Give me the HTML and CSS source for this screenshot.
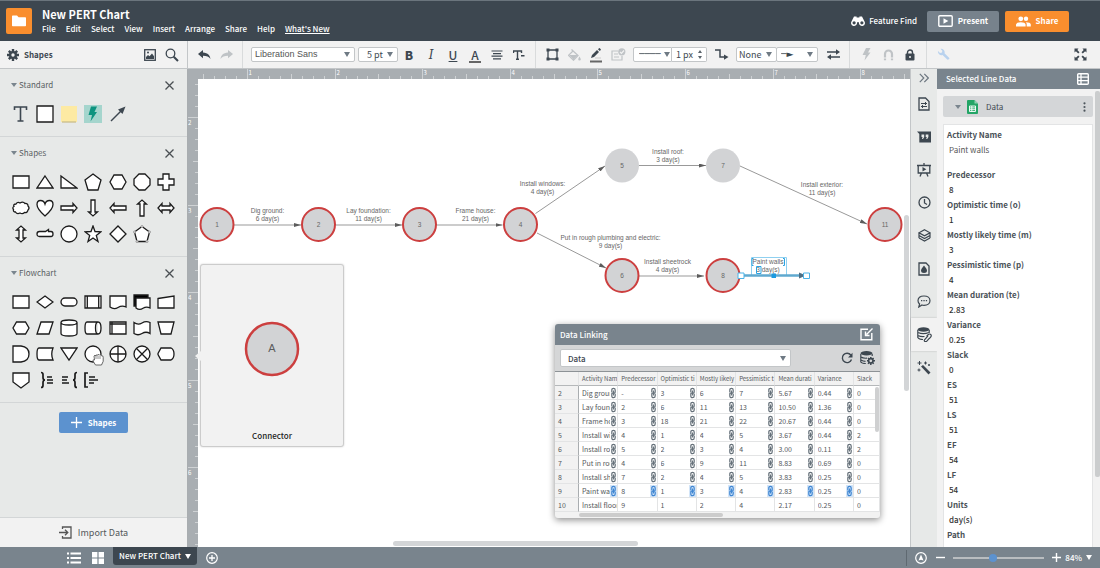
FILE: index.html
```html
<!DOCTYPE html>
<html lang="en">
<head>
    <meta charset="utf-8">
    <title>New PERT Chart</title>
    <meta name="viewport" content="width=device-width, initial-scale=1">
    <link rel="stylesheet" href="styles.css">
</head>
<body>
    <header class="topbar">
        <a href="#" class="logo" aria-label="Documents">
            <svg width="14" height="12" viewBox="0 0 14 12"><path d="M0 1.2Q0 .5.7.5H5l1.6 1.8h6.7q.7 0 .7.7v7.6q0 .7-.7.7H.7q-.7 0-.7-.7z" fill="#fff"/></svg>
        </a>
        <div class="doc">
            <h1>New PERT Chart</h1>
            <nav class="menu">
                <a href="#">File</a>
                <a href="#">Edit</a>
                <a href="#">Select</a>
                <a href="#">View</a>
                <a href="#">Insert</a>
                <a href="#">Arrange</a>
                <a href="#">Share</a>
                <a href="#">Help</a>
                <a href="#" class="whats-new">What's New</a>
            </nav>
        </div>
        <button class="feature-find">
            <svg width="14" height="10" viewBox="0 0 14 10"><path fill="#fff" d="M3 .4h2.6v1.1h2.8V.4H11l2.5 5A3 3 0 1 1 8 7.5V6.3H6v1.2A3 3 0 1 1 .5 5.4z"/><circle cx="3.1" cy="6.8" r="1.6" fill="#3d4750"/><circle cx="10.9" cy="6.8" r="1.6" fill="#3d4750"/></svg>
            Feature Find
        </button>
        <button class="btn btn-present">
            <svg width="15" height="12" viewBox="0 0 15 12"><rect x=".8" y=".8" width="13.4" height="10.4" rx="1" fill="none" stroke="#fff" stroke-width="1.4"/><path d="M5.5 3.2v5.6L10.300 6z" fill="#fff"/></svg>
            Present
        </button>
        <button class="btn btn-share">
            <svg width="15" height="11" viewBox="0 0 15 11"><g fill="#fff"><circle cx="4.800" cy="2.800" r="2.400"/><circle cx="10" cy="2.800" r="2.200"/><path d="M0 10.500V8.500Q.5 6.300 4.800 6.300T9.600 8.500v2zM10.700 10.500h4.100V8.500Q14.500 6.300 9.800 6.300q1 .8.9 2.200z"/></g></svg>
            Share
        </button>
    </header>

    <div class="toolbar">
        <div class="tool-shapes">
            <button class="icon-btn" aria-label="Shape settings">
                <svg width="12" height="12" viewBox="0 0 12 12"><g stroke="#3d4750" stroke-width="2.400"><path d="M6 0v12M0 6h12M1.800 1.800l8.400 8.400M10.200 1.800l-8.400 8.400"/></g><circle cx="6" cy="6" r="4" fill="#3d4750"/><circle cx="6" cy="6" r="1.700" fill="#f2f2f2"/></svg>
            </button>
            <span class="tool-title">Shapes</span>
            <button class="icon-btn" aria-label="Images">
                <svg width="12" height="12" viewBox="0 0 12 12"><rect x=".7" y=".7" width="10.600" height="10.600" fill="none" stroke="#3d4750" stroke-width="1.300"/><path d="M2 10V8l2-2 1.500 1.300L8 4.500l2 2.800V10z" fill="#3d4750"/><circle cx="4" cy="3.500" r="1" fill="#3d4750"/></svg>
            </button>
            <button class="icon-btn" aria-label="Search shapes">
                <svg width="14" height="14" viewBox="0 0 14 14" fill="none" stroke="#3d4750"><circle cx="5.500" cy="5.500" r="4.300" stroke-width="1.300"/><path d="M8.700 8.700l4.300 4.300" stroke-width="2"/></svg>
            </button>
        </div>
        <div class="tool-group">
            <button class="icon-btn" aria-label="Undo"><svg width="13" height="10" viewBox="0 0 13 10"><path d="M5 0v2.500c5 .3 7 3 7.500 6.500C11 6.500 8.500 5.700 5 5.700V8.200L0 4.100z" fill="#3d4750"/></svg></button>
            <button class="icon-btn" aria-label="Redo"><svg width="13" height="10" viewBox="0 0 13 10"><path d="M8 0v2.500C3 2.800 1 5.500.5 9 2 6.500 4.500 5.700 8 5.700V8.200l5-4.100z" fill="#bfc3c6"/></svg></button>
        </div>
        <div class="tool-group text-group">
            <span class="drop drop-font"><select aria-label="Font"><option>Liberation Sans</option></select></span>
            <span class="drop drop-size"><select aria-label="Font size"><option>5 pt</option></select></span>
            <button class="icon-btn glyph bold" aria-label="Bold">B</button>
            <button class="icon-btn glyph italic" aria-label="Italic">I</button>
            <button class="icon-btn glyph underline" aria-label="Underline">U</button>
            <button class="icon-btn glyph text-color" aria-label="Text color">A</button>
            <button class="icon-btn" aria-label="Align"><svg width="12" height="10" viewBox="0 0 12 10" stroke="#3d4750" stroke-width="1.200"><path d="M.5 1h11M2 3.600h8M.5 6.200h11M2 8.800h8"/></svg></button>
            <button class="icon-btn" aria-label="Text options"><svg width="12" height="10" viewBox="0 0 12 10"><path d="M.5 3V1h8v2M4.500 1v8M3 9.200h3M8 5.800h3.500" fill="none" stroke="#3d4750" stroke-width="1.400"/></svg></button>
        </div>
        <div class="tool-group shape-group">
            <button class="icon-btn" aria-label="Shape"><svg width="13" height="13" viewBox="0 0 13 13"><path d="M2 2h9v9H2z" fill="none" stroke="#3d4750" stroke-width="1.300"/><path d="M.5.500h3v3h-3zM9.500.500h3v3h-3zM.5 9.500h3v3h-3zM9.500 9.500h3v3h-3z" fill="#3d4750"/></svg></button>
            <button class="icon-btn" aria-label="Fill"><svg width="13" height="12" viewBox="0 0 13 12"><path d="M3.500.500l6.500 6-4.500 4.700L.5 6.400 5 2" fill="none" stroke="#bfc3c6" stroke-width="1.300"/><path d="M1.200 6h8.500l-4.200 4.500zM11.500 7.500q2.600 4 0 4t0-4z" fill="#bfc3c6"/></svg></button>
            <button class="icon-btn" aria-label="Line color"><svg width="12" height="16" viewBox="0 0 12 16"><path d="M1 11l1-3 5-5 2 2-5 5zM8 2.200L9.200 1q.9 0 1.800 1.800L9.800 4z" fill="#3d4750"/><path d="M5 11h6" stroke="#ccc"/><path d="M0 13.500h12v2H0z" fill="#666"/></svg></button>
            <button class="icon-btn" aria-label="Theme"><svg width="15" height="13" viewBox="0 0 15 13" fill="none" stroke="#bfc3c6" stroke-width="1.200"><path d="M7 3H1v9h10V8M3 6h4M3 9h5"/><circle cx="10.800" cy="3.800" r="3.600" fill="#bfc3c6" stroke="none"/><path d="M9 3.800l1.400 1.500L13 2.500" stroke="#f2f2f2"/></svg></button>
            <span class="drop drop-line"><select aria-label="Line style"><option>&#9472;&#9472;&#9472;&#9472;</option></select></span>
            <input class="line-width" type="text" value="1 px" aria-label="Line width">
            <button class="stepper" aria-label="Step line width"><svg width="4" height="9" viewBox="0 0 4 9"><path d="M0 3l2-3 2 3zM0 6l2 3 2-3z" fill="#5a636b"/></svg></button>
            <button class="icon-btn" aria-label="Connector type"><svg width="14" height="11" viewBox="0 0 14 11"><path d="M0 1h5v7h5" fill="none" stroke="#3d4750" stroke-width="1.500"/><path d="M9 5.500L13.500 8 9 10.700z" fill="#3d4750"/></svg></button>
            <span class="drop drop-start"><select aria-label="Line start"><option>None</option></select></span>
            <span class="drop drop-end"><select aria-label="Line end"><option>&#9472;&#9658;</option></select></span>
            <button class="icon-btn" aria-label="Swap ends"><svg width="13" height="11" viewBox="0 0 13 11"><path d="M0 3h10M13 8H3" stroke="#3d4750" stroke-width="1.400"/><path d="M9 .3L13 3 9 5.700zM4 5.300L0 8l4 2.700z" fill="#3d4750"/></svg></button>
        </div>
        <div class="tool-group action-group">
            <button class="icon-btn" aria-label="Actions"><svg width="9" height="13" viewBox="0 0 9 13"><path d="M4 0h4.500L6 4.500h2.500L2.500 12.500 3.800 7H.5z" fill="#bfc3c6"/></svg></button>
            <button class="icon-btn" aria-label="Magnet"><svg width="11" height="12" viewBox="0 0 11 12"><path d="M2 8.500V5a3.500 3.500 0 0 1 7 0v3.500M2 9.500v1.800M9 9.500v1.800" fill="none" stroke="#bfc3c6" stroke-width="2.200"/></svg></button>
            <button class="icon-btn" aria-label="Lock"><svg width="10" height="12" viewBox="0 0 10 12"><path d="M2.500 5V3.500a2.500 2.500 0 0 1 5 0V5" fill="none" stroke="#3d4750" stroke-width="1.400"/><rect x=".5" y="4.500" width="9" height="7" rx="1" fill="#3d4750"/><circle cx="5" cy="8" r="1" fill="#f2f2f2"/></svg></button>
        </div>
        <div class="tool-group last-group">
            <button class="icon-btn" aria-label="Tools"><svg width="13" height="13" viewBox="0 0 13 13"><path d="M1 3l2 2 2-.5L5.300 2.700 3.500.800A3.500 3.500 0 0 1 7.500 5.300L12.300 10q.5 1.600-1.800 1.800L5.500 7A3.500 3.500 0 0 1 1 3z" fill="#b9d2ee"/></svg></button>
            <button class="icon-btn expand" aria-label="Full screen"><svg width="13" height="13" viewBox="0 0 13 13"><path d="M.5.500h4L3.300 1.900 5.500 4.200 4.200 5.500 1.900 3.300.500 4.500zM12.500.500v4L11.100 3.300 8.800 5.500 7.500 4.200 9.700 1.900 8.500.500zM.5 12.500v-4l1.400 1.200 2.300-2.200 1.300 1.300-2.200 2.300 1.200 1.400zM12.500 12.500h-4l1.200-1.400-2.200-2.300 1.300-1.300 2.300 2.200 1.400-1.200z" fill="#3d4750"/></svg></button>
        </div>
    </div>

    <main class="workspace">
        <aside class="shapes-panel">
            <section class="shape-set">
                <header><button class="toggle">Standard</button><button class="close" aria-label="Close Standard"><svg width="9" height="9" viewBox="0 0 9 9"><path d="M.5.500l8 8M8.500.500l-8 8"/></svg></button></header>
                <div class="shape-grid">
                    <svg viewBox="0 0 18 18" class="plain"><path d="M2.500 5V2h12v3M8.500 2v14M5.500 16h6" fill="none" stroke="#3d4750" stroke-width="1.600"/></svg>
                    <svg viewBox="0 0 18 18"><path d="M1 1h16v16H1z"/></svg>
                    <svg viewBox="0 0 18 18" class="plain"><path d="M1 1h16v16H1z" fill="#fdeaa3"/><path d="M2 17h14" stroke="#c9bd8b"/></svg>
                    <svg viewBox="0 0 18 18" class="plain"><path d="M0 0h18v18H0z" fill="#a5d5cd"/><path d="M7 1.500h6L10.500 7H13L6.500 16.500 8 10H4.500z" fill="#0d937f"/></svg>
                    <svg viewBox="0 0 18 18" class="plain"><path d="M2 16L13 5" stroke="#3d4750" stroke-width="1.500"/><path d="M9 4.500L16.500 1.500 13.500 9z" fill="#3d4750"/></svg>
                </div>
            </section>
            <section class="shape-set">
                <header><button class="toggle">Shapes</button><button class="close" aria-label="Close Shapes"><svg width="9" height="9" viewBox="0 0 9 9"><path d="M.5.500l8 8M8.500.500l-8 8"/></svg></button></header>
                <div class="shape-grid">
                    <svg viewBox="0 0 18 18"><path d="M1 3h16v12H1z"/></svg>
                    <svg viewBox="0 0 18 18"><path d="M9 3l8 12H1z"/></svg>
                    <svg viewBox="0 0 18 18"><path d="M1 3l16 12H1z"/></svg>
                    <svg viewBox="0 0 18 18"><path d="M9 1l8 6-3 10H4L1 7z"/></svg>
                    <svg viewBox="0 0 18 18"><path d="M5 2h8l4 7-4 7H5L1 9z"/></svg>
                    <svg viewBox="0 0 18 18"><path d="M6 1h6l5 5v6l-5 5H6l-5-5V6z"/></svg>
                    <svg viewBox="0 0 18 18"><path d="M6 1h6v5h5v6h-5v5H6v-5H1V6h5z"/></svg>
                    <svg viewBox="0 0 18 18"><path d="M4 5q1.500-2.500 4-1 3-2 5 .5 3-.3 3 2.500 2 2 0 4-.5 3-3.500 2.500-2 2-4.500.5-3 1.500-4.500-1-2.500 0-2-2.500-1.500-2 .5-3Q1 5 4 5z"/></svg>
                    <svg viewBox="0 0 18 18"><path d="M9 17Q1 10 1 5.500 1 1.500 4.500 1.500 8 1.500 9 5q1-3.500 4.500-3.500Q17 1.500 17 5.500 17 10 9 17z"/></svg>
                    <svg viewBox="0 0 18 18"><path d="M1 7h12V4.500L17 9l-4 4.500V11H1z"/></svg>
                    <svg viewBox="0 0 18 18"><path d="M7 1h4v12h2.500L9 17l-4.500-4H7z"/></svg>
                    <svg viewBox="0 0 18 18"><path d="M17 7H5V4.500L1 9l4 4.500V11h12z"/></svg>
                    <svg viewBox="0 0 18 18"><path d="M7 17h4V5h2.500L9 1 4.500 5H7z"/></svg>
                    <svg viewBox="0 0 18 18"><path d="M5 7h8V4.500L17 9l-4 4.500V11H5v2.500L1 9l4-4.500z"/></svg>
                    <svg viewBox="0 0 18 18"><path d="M7 5v8H4.500L9 17l4.500-4H11V5h2.500L9 1 4.500 5z"/></svg>
                    <svg viewBox="0 0 18 18"><path d="M3.500 6.500H9.500L12.500 4.500v2H15Q17 6.500 17 9t-2 2.500H3.500Q1 11.500 1 9t2.500-2.500z"/></svg>
                    <svg viewBox="0 0 18 18"><circle cx="9" cy="9" r="8"/></svg>
                    <svg viewBox="0 0 18 18"><path d="M9 1l2 5.500 6 .3-4.700 3.600L14 16.500 9 13l-5 3.500 1.700-6.100L1 6.800l6-.3z"/></svg>
                    <svg viewBox="0 0 18 18"><path d="M9 1l8 8-8 8-8-8z"/></svg>
                    <svg viewBox="0 0 18 18"><path d="M9 1.500l7.500 5.500-2.500 9.500H4L1.500 7z"/><g class="dots"><circle cx="9" cy="1.500" r="1"/><circle cx="16.500" cy="7" r="1"/><circle cx="14" cy="16.500" r="1"/><circle cx="4" cy="16.500" r="1"/><circle cx="1.500" cy="7" r="1"/></g></svg>
                </div>
            </section>
            <section class="shape-set">
                <header><button class="toggle">Flowchart</button><button class="close" aria-label="Close Flowchart"><svg width="9" height="9" viewBox="0 0 9 9"><path d="M.5.500l8 8M8.500.500l-8 8"/></svg></button></header>
                <div class="shape-grid">
                    <svg viewBox="0 0 18 18"><path d="M1 3h16v12H1z"/></svg>
                    <svg viewBox="0 0 18 18"><path d="M9 3l8 6-8 6-8-6z"/></svg>
                    <svg viewBox="0 0 18 18"><rect x="1" y="5" width="16" height="8" rx="4"/></svg>
                    <svg viewBox="0 0 18 18"><path d="M1 3h16v12H1zM3.300 3v12M14.700 3v12"/></svg>
                    <svg viewBox="0 0 18 18"><path d="M1 3h16v11q-4-2-8 .5T1 14z"/></svg>
                    <svg viewBox="0 0 18 18"><path d="M1 2h14v11H1z" fill="#000"/><path d="M3 5h14v10q-3.500-2-7 .3T3 15z"/></svg>
                    <svg viewBox="0 0 18 18"><path d="M1 5.500L17 3v12H1z"/></svg>
                    <svg viewBox="0 0 18 18"><path d="M4.500 3h9L17 9l-3.500 6h-9L1 9z"/></svg>
                    <svg viewBox="0 0 18 18"><path d="M5 3h12l-4 12H1z"/></svg>
                    <svg viewBox="0 0 18 18"><path d="M1 3.500v11q0 2.500 8 2.500t8-2.500v-11Q17 1 9 1T1 3.500 9 6t8-2.500"/></svg>
                    <svg viewBox="0 0 18 18"><path d="M3 3h11q3 0 3 6t-3 6H3q-2 0-2-6t2-6zM14 3q-2.500 0-2.500 6t2.500 6"/></svg>
                    <svg viewBox="0 0 18 18"><path d="M1 3h16v12H1zM1 5h16M3 3v12"/></svg>
                    <svg viewBox="0 0 18 18"><path d="M1 3.500q4 3 8 .5t8-.5v11q-4-2.500-8 0t-8 0z"/></svg>
                    <svg viewBox="0 0 18 18"><path d="M1 3h16l-3 12H4z"/></svg>
                    <svg viewBox="0 0 18 18"><path d="M1 1h8q8 1 8 8t-8 8H1z"/></svg>
                    <svg viewBox="0 0 18 18"><path d="M3 3h14q-2.500 6 0 12H3q-2 0-2-6t2-6z"/></svg>
                    <svg viewBox="0 0 18 18"><path d="M1 3h16L9 15z"/></svg>
                    <span class="grabbed">
                        <svg viewBox="0 0 18 18"><circle cx="9" cy="9" r="8"/></svg>
                        <svg class="hand" viewBox="0 0 12 13"><path d="M3.500 12L1 8q-.5-1.800 1.500-1L2 3q1-1.700 2 0 .3-2 1.800-1Q7 .5 7.700 2.200q1.300-.9 1.800.6 1.700-.5 1.700 1.500v4L9.500 12z" fill="#fff" stroke="#444" stroke-width=".8"/><path d="M4 3v3M6 2.500V6M8 3v3" stroke="#444" stroke-width=".6"/></svg>
                    </span>
                    <svg viewBox="0 0 18 18"><circle cx="9" cy="9" r="8"/><path d="M9 1v16M1 9h16"/></svg>
                    <svg viewBox="0 0 18 18"><circle cx="9" cy="9" r="8"/><path d="M3.300 3.300l11.400 11.400M14.700 3.300L3.300 14.700"/></svg>
                    <svg viewBox="0 0 18 18"><path d="M4 3h10q3 1.500 3 6t-3 6H4L1 9.500v-1z"/></svg>
                    <svg viewBox="0 0 18 18"><path d="M1 2h16v9l-8 6-8-6z"/></svg>
                    <svg viewBox="0 0 18 18" class="note"><path d="M5 1.500q2 0 2 2v3q0 2.500 2 2.500-2 0-2 2.500v3q0 2-2 2M11 6h5M11 9h6M11 12h6"/></svg>
                    <svg viewBox="0 0 18 18" class="note"><path d="M17 1.500q-2 0-2 2v3Q15 9 13 9q2 0 2 2.500v3q0 2 2 2M2 6h6M2 9h5M2 12h7"/></svg>
                    <svg viewBox="0 0 18 18" class="note"><path d="M4 2H1v14h3M5 6h6M5 9h9M5 12h5"/></svg>
                </div>
            </section>
            <button class="add-shapes"><svg width="11" height="11" viewBox="0 0 11 11"><path d="M5.500 0v11M0 5.500h11" stroke="#fff" stroke-width="1.300"/></svg>Shapes</button>
            <button class="import-data"><svg width="13" height="13" viewBox="0 0 13 13" fill="none" stroke="#555" stroke-width="1.300"><path d="M3.500 3V1h8.500v11H3.500v-2M0 6.500h8.500M6 3.800l2.800 2.700L6 9.200"/></svg>Import Data</button>
        </aside>

        <div class="stage">
            <svg class="ruler-h" id="rulerH"></svg>
            <svg class="ruler-v" id="rulerV"></svg>
            <div class="canvas">
                <svg class="diagram" viewBox="396 158 1424 936" preserveAspectRatio="xMinYMin slice">
                    <defs>
                        <marker id="arrow" viewBox="0 0 14 8" refX="14" refY="4" markerWidth="14" markerHeight="8" markerUnits="userSpaceOnUse" orient="auto"><path d="M0 0l14 4-14 4z" fill="#5c5c5c"/></marker>
                    </defs>
                    <g class="edges">
                        <path d="M468 450h134"/>
                        <path d="M671 450h133"/>
                        <path d="M873 450h132"/>
                        <path d="M1071 427L1210 332"/>
                        <path d="M1074 466L1212 536"/>
                        <path d="M1278 331h134"/>
                        <path d="M1480 332L1734 448"/>
                        <path d="M1278 552h130"/>
                    </g>
                    <g class="nodes critical">
                        <circle cx="434" cy="449" r="33"/><circle cx="637" cy="449" r="33"/><circle cx="839" cy="449" r="33"/>
                        <circle cx="1041" cy="449" r="33"/><circle cx="1244" cy="551" r="33"/><circle cx="1446" cy="551" r="33"/>
                        <circle cx="1770" cy="449" r="33"/>
                    </g>
                    <g class="nodes">
                        <circle cx="1244" cy="331" r="34"/><circle cx="1446" cy="331" r="34"/>
                    </g>
                    <g class="labels">
                        <text x="434" y="453">1</text><text x="637" y="453">2</text><text x="839" y="453">3</text>
                        <text x="1041" y="453">4</text><text x="1244" y="335">5</text><text x="1244" y="555">6</text>
                        <text x="1446" y="335">7</text><text x="1446" y="555">8</text><text x="1770" y="453">11</text>
                        <text x="535" y="426">Dig ground:</text><text x="535" y="441">6 day(s)</text>
                        <text x="737" y="426">Lay foundation:</text><text x="737" y="441">11 day(s)</text>
                        <text x="951" y="426">Frame house:</text><text x="951" y="441">21 day(s)</text>
                        <text x="1085" y="372">Install windows:</text><text x="1085" y="388">4 day(s)</text>
                        <text x="1336" y="308">Install roof:</text><text x="1336" y="324">3 day(s)</text>
                        <text x="1644" y="374">Install exterior:</text><text x="1644" y="390">11 day(s)</text>
                        <text x="1221" y="479">Put in rough plumbing and electric:</text><text x="1221" y="495">9 day(s)</text>
                        <text x="1335" y="528">Install sheetrock</text><text x="1335" y="544">4 day(s)</text>
                        <text x="1536" y="528">Paint walls</text><text x="1536" y="544">3 day(s)</text>
                    </g>
                    <g class="selection">
                        <path class="soft" d="M1503 515h70v36h-70z"/>
                        <path class="line" d="M1486 551h116"/>
                        <path d="M1598 545v12l14-6z" fill="#4f6f84"/>
                        <path class="mark" d="M1507 517h-3v14h3M1566 517h3v14h-3M1513 533h9v14h-9z"/>
                        <path class="handle" d="M1476 546h12v11h-12zM1607 546h12v11h-12z"/>
                        <path d="M1543 547h9v9h-9z" fill="#1b9ae0"/>
                    </g>
                </svg>

                <div class="preview">
                    <svg width="56" height="56" viewBox="0 0 56 56"><circle cx="28" cy="28" r="26" fill="#d2d3d5" stroke="#cc3f3f" stroke-width="2.500"/><text x="28" y="31">A</text></svg>
                    <p>Connector</p>
                </div>

                <section class="linking">
                    <header>Data Linking
                        <button class="bare" aria-label="Dock"><svg width="13" height="13" viewBox="0 0 13 13" fill="none" stroke="#fff" stroke-width="1.400"><path d="M8 1.200H1v10.600h10.800V5"/><path d="M12.500.500L6.500 6.500M5.500 3.500v4h4"/></svg></button>
                    </header>
                    <div class="linking-bar">
                        <span class="drop drop-source"><select aria-label="Data source"><option>Data</option></select></span>
                        <button class="bare" aria-label="Refresh"><svg width="12" height="12" viewBox="0 0 12 12"><path d="M9.800 3A4.700 4.700 0 1 0 10.500 7.500" fill="none" stroke="#3d4750" stroke-width="1.400"/><path d="M11.500.800v4.700H7z" fill="#3d4750"/></svg></button>
                        <button class="bare" aria-label="Data settings"><svg width="15" height="14" viewBox="0 0 15 14"><ellipse cx="6.500" cy="2.300" rx="6" ry="2.200" fill="#3d4750"/><path d="M.8 3v8q1 1.500 5 1.500M12.200 3v2M1 6q2 1.500 6 1.200M1 9q2 1.300 4.500 1.300" fill="none" stroke="#3d4750" stroke-width="1.200"/><circle cx="10.800" cy="9.800" r="2.200" fill="none" stroke="#3d4750" stroke-width="1.600"/><path d="M10.800 6v1.500M10.800 12v2M7 9.800h1.500M13 9.800h2M8 7l1.200 1.200M12.500 11.500l1.200 1.200M13.600 7l-1.200 1.200M9.100 11.500L8 12.700" stroke="#3d4750" stroke-width="1.500"/></svg></button>
                    </div>
                    <div class="table-wrap">
                        <table>
                            <colgroup><col class="col-index"><col><col><col><col><col><col><col><col class="col-slack"></colgroup>
                            <thead>
                                <tr><th></th><th>Activity Name</th><th>Predecessor</th><th>Optimistic ti</th><th>Mostly likely</th><th>Pessimistic t</th><th>Mean durati</th><th>Variance</th><th>Slack</th></tr>
                            </thead>
                            <tbody id="rows"></tbody>
                        </table>
                        <span class="thumb-v"></span>
                    </div>
                    <div class="scroll-h"><span></span></div>
                </section>
                <span class="canvas-thumb-v"></span>
                <span class="canvas-thumb-h"></span>
            </div>
        </div>

        <nav class="rail">
            <button class="collapse" aria-label="Collapse"><svg width="10" height="10" viewBox="0 0 10 10" fill="none" stroke="#6d7780" stroke-width="1.200"><path d="M.8.800L4.800 5l-4 4.200M5.300.800L9.300 5l-4 4.200"/></svg></button>
            <button aria-label="Page settings"><svg width="12" height="14" viewBox="0 0 12 14" fill="none" stroke="#3d4750" stroke-width="1.300"><path d="M1 1h6.500L11 4.500V13H1z"/><path d="M3 6.500h6M3 9.500h6M7.500 5v3M4.500 8v3" stroke-width="1"/></svg></button>
            <button aria-label="Comments"><svg width="14" height="12" viewBox="0 0 14 12"><path d="M0 .5h14v11H2.300V3z" fill="#3d4750"/><path d="M4.500 3.500h2.700v2.500L6 8H5l.6-2H4.500zM8.700 3.500h2.700v2.500L10.200 8h-1l.6-2H8.700z" fill="#e7e9e8"/></svg></button>
            <button aria-label="Presentation"><svg width="14" height="14" viewBox="0 0 14 14" fill="none" stroke="#3d4750" stroke-width="1.300"><path d="M0 2.500h14M1.200 2.500v7.500h11.600V2.500M7 0v2.500M4.500 10L3 13.500M9.500 10l1.500 3.500"/><path d="M5.500 4v4.500L9.300 6.300z" fill="#3d4750" stroke="none"/></svg></button>
            <button aria-label="History"><svg width="13" height="13" viewBox="0 0 13 13" fill="none" stroke="#3d4750" stroke-width="1.300"><circle cx="6.500" cy="6.500" r="5.500"/><path d="M6.500 3v4l2.500 1.500"/></svg></button>
            <button aria-label="Layers"><svg width="13" height="13" viewBox="0 0 13 13" fill="none" stroke="#3d4750" stroke-width="1.200"><path d="M6.500.800l5.500 3-5.500 3-5.500-3zM1 6.500l5.500 3 5.500-3M1 9l5.500 3L12 9M1 3.800V9M12 3.800V9"/></svg></button>
            <button aria-label="Theme"><svg width="12" height="14" viewBox="0 0 12 14"><path d="M1 1h7l3 3v9H1z" fill="none" stroke="#3d4750" stroke-width="1.300"/><path d="M6 3.500q3 3.500 3 5a3 2.500 0 0 1-6 0q0-1.500 3-5z" fill="#3d4750"/></svg></button>
            <button aria-label="Chat"><svg width="14" height="13" viewBox="0 0 14 13"><path d="M7 1C10.500 1 13 3 13 5.700S10.500 10.300 7 10.300q-1 0-2-.3L1.800 12l.8-3Q1 7.700 1 5.700 1 1 7 1z" fill="none" stroke="#3d4750" stroke-width="1.200"/><path d="M4 5h1.300v1.300H4zM6.400 5h1.300v1.300H6.400zM8.800 5h1.300v1.300H8.800z" fill="#3d4750"/></svg></button>
            <button class="active" aria-label="Data linking"><svg width="15" height="15" viewBox="0 0 15 15"><ellipse cx="6.500" cy="2.500" rx="6" ry="2.200" fill="#3d4750"/><path d="M.8 3v7.500Q2 12.500 6 12.500M12.200 3v3M1 5.500q5 2.300 11 0M1 8.500q3 1.500 6.500 1" fill="none" stroke="#3d4750" stroke-width="1.200"/><path d="M9.500 9.500l1.800-2q1.500-1 2.500 0 .9 1.200 0 2.300l-1.500 1.800M11 8.800l-3.500 4q-.6 1 .3 1.700 1.200.5 2-.3l2.500-2.900" fill="none" stroke="#3d4750" stroke-width="1.200"/></svg></button>
            <button aria-label="Magic"><svg width="14" height="14" viewBox="0 0 14 14"><path d="M4 5.500L6 4l7.500 7.500-2 2z" fill="#3d4750"/><path d="M2.500 0v4M.5 2h4M8.500.500v3M7 2h3M12 3v2M11 4h2M2 7.500v3M.5 9h3" stroke="#3d4750"/></svg></button>
        </nav>

        <aside class="data-panel">
            <header>Selected Line Data
                <button class="bare" aria-label="View as table"><svg width="12" height="12" viewBox="0 0 12 12"><rect x=".7" y=".7" width="10.600" height="10.600" rx="1" fill="none" stroke="#fff" stroke-width="1.400"/><path d="M4 1v10M1 4.200h10M1 7.700h10" stroke="#fff" stroke-width="1.300"/></svg></button>
            </header>
            <div class="data-body">
                <div class="data-source">
                    <button class="toggle" aria-label="Toggle data"></button>
                    <svg width="11" height="14" viewBox="0 0 11 14"><path d="M0 1q0-1 1-1h6.500L11 3.500V13q0 1-1 1H1q-1 0-1-1z" fill="#23a566"/><path d="M7.500 0v3.500H11z" fill="#8ed1b1"/><path d="M2.500 6h6v5.500h-6zM2.500 7.900h6M2.500 9.700h6M4.800 6v5.500" fill="none" stroke="#fff" stroke-width=".9"/></svg>
                    <span>Data</span>
                    <button class="bare" aria-label="More"><svg width="3" height="10" viewBox="0 0 3 10" fill="#4d555c"><circle cx="1.500" cy="1.300" r="1.100"/><circle cx="1.500" cy="5" r="1.100"/><circle cx="1.500" cy="8.700" r="1.100"/></svg></button>
                </div>
                <dl class="fields">
                    <dt>Activity Name</dt><dd class="name">Paint walls</dd>
                    <dt>Predecessor</dt><dd>8</dd>
                    <dt>Optimistic time (o)</dt><dd>1</dd>
                    <dt>Mostly likely time (m)</dt><dd>3</dd>
                    <dt>Pessimistic time (p)</dt><dd>4</dd>
                    <dt>Mean duration (te)</dt><dd>2.83</dd>
                    <dt>Variance</dt><dd>0.25</dd>
                    <dt>Slack</dt><dd>0</dd>
                    <dt>ES</dt><dd>51</dd>
                    <dt>LS</dt><dd>51</dd>
                    <dt>EF</dt><dd>54</dd>
                    <dt>LF</dt><dd>54</dd>
                    <dt>Units</dt><dd>day(s)</dd>
                    <dt>Path</dt>
                </dl>
                <span class="panel-thumb"></span>
            </div>
        </aside>
    </main>

    <footer class="bottombar">
        <button class="bare" aria-label="List"><svg width="14" height="12" viewBox="0 0 14 12" stroke="#fff" stroke-width="1.800"><path d="M3.500 1.500H14M3.500 6H14M3.500 10.500H14M0 1.500h2M0 6h2M0 10.500h2"/></svg></button>
        <button class="bare" aria-label="Grid"><svg width="12" height="12" viewBox="0 0 12 12" fill="#fff"><path d="M0 0h5.400v5.400H0zM6.600 0H12v5.400H6.600zM0 6.600h5.400V12H0zM6.600 6.600H12V12H6.600z"/></svg></button>
        <button class="page-tab">New PERT Chart</button>
        <button class="bare" aria-label="Add page"><svg width="12" height="12" viewBox="0 0 12 12" fill="none" stroke="#fff"><circle cx="6" cy="6" r="5.300" stroke-width="1.200"/><path d="M6 3v6M3 6h6" stroke-width="1.300"/></svg></button>
        <div class="zoom">
            <button class="bare" aria-label="Navigator"><svg width="12" height="12" viewBox="0 0 12 12"><circle cx="6" cy="6" r="5.300" fill="none" stroke="#fff" stroke-width="1.200"/><path d="M6 2.500l2.500 6L6 7.700l-2.500.800z" fill="#fff"/></svg></button>
            <button class="bare" aria-label="Zoom out"><svg width="9" height="9" viewBox="0 0 9 9"><path d="M0 4.500h9" stroke="#fff" stroke-width="1.400"/></svg></button>
            <input type="range" min="0" max="100" value="43" aria-label="Zoom">
            <button class="bare" aria-label="Zoom in"><svg width="9" height="9" viewBox="0 0 9 9"><path d="M4.500 0v9M0 4.500h9" stroke="#fff" stroke-width="1.400"/></svg></button>
            <button class="zoom-value">84%</button>
        </div>
    </footer>
    <script src="script.js"></script>
</body>
</html>
```
FILE: styles.css
```css
* {
    box-sizing: border-box;
}
body {
    margin: 0;
    height: 100vh;
    display: flex;
    flex-direction: column;
    overflow: hidden;
    font-family: "Noto Sans CJK SC", "Noto Sans", sans-serif;
    font-size: 8px;
    line-height: 14px;
    color: #3d4750;
    background: #fff;
}
button, select, input {
    font: inherit;
    color: inherit;
}
button {
    background: none;
    border: none;
    padding: 0;
    cursor: pointer;
}
svg {
    display: block;
}
a {
    color: inherit;
    text-decoration: none;
}
.bare, .icon-btn {
    display: flex;
    align-items: center;
    justify-content: center;
}

/* top bar */
.topbar {
    display: flex;
    align-items: center;
    flex: none;
    height: 41px;
    padding: 0 31px 0 6px;
    border-top: 1px solid #6b757d;
    background: #3d4750;
    color: #fff;
}
.logo {
    display: flex;
    align-items: center;
    justify-content: center;
    width: 26px;
    height: 26px;
    margin-right: 10px;
    border-radius: 2px;
    background: #f98e2e;
}
.doc {
    flex: 1;
}
.doc h1 {
    margin: 0;
    font-size: 11px;
    line-height: 16px;
}
.menu {
    display: flex;
    gap: 10px;
    font-weight: 500;
    line-height: 14px;
}
.whats-new {
    text-decoration: underline;
}
.feature-find, .btn {
    display: flex;
    align-items: center;
    color: #fff;
}
.feature-find {
    gap: 4px;
    margin-right: 10px;
    font-weight: 500;
}
.btn {
    justify-content: center;
    gap: 5px;
    height: 21px;
    border-radius: 2px;
    font-weight: bold;
}
.btn-present {
    width: 72px;
    margin-right: 6px;
    background: #77828c;
}
.btn-share {
    width: 64px;
    background: #f98e2e;
}

/* toolbar */
.toolbar {
    display: flex;
    flex: none;
    height: 28px;
    background: #f2f2f2;
    border-bottom: 1px solid #c3c6c8;
}
.tool-shapes, .tool-group {
    display: flex;
    align-items: center;
    border-right: 1px solid #d9dbdc;
}
.tool-shapes {
    width: 188px;
    padding: 0 4px 0 2px;
    border-color: #c3c6c8;
}
.tool-title {
    flex: 1;
    font-weight: bold;
}
.tool-group {
    padding: 0 5px;
}
.icon-btn {
    width: 22px;
    height: 20px;
}
.glyph {
    font-size: 12px;
    font-weight: 500;
}
.bold {
    font-weight: 900;
}
.italic {
    font-family: "DejaVu Serif", serif;
    font-style: italic;
}
.underline {
    text-decoration: underline;
}
.text-color {
    height: 16px;
    background: linear-gradient(#666, #666) center bottom / 12px 2px no-repeat;
    line-height: 12px;
}
.text-group {
    padding: 0 5px 0 8px;
}
.drop {
    position: relative;
    display: block;
}
.drop select {
    width: 100%;
    height: 15px;
    padding: 0 0 0 2px;
    border: 1px solid #c3c6c8;
    border-radius: 2px;
    background: #fff;
    appearance: none;
    font-size: 9px;
    line-height: 13px;
}
.drop::after {
    content: "";
    position: absolute;
    right: 5px;
    top: 5px;
    border: 3px solid transparent;
    border-top: 5px solid #6f7a84;
    border-bottom: 0;
}
.drop-font {
    width: 104px;
    margin-right: 3px;
}
.drop-font select {
    padding-left: 3px;
    font-family: "Liberation Sans", Arial, sans-serif;
    color: #555;
}
.drop-size {
    width: 40px;
}
.drop-size select {
    padding-left: 8px;
}
.drop-line {
    width: 39px;
    margin-left: 4px;
}
.drop-line select {
    padding-left: 5px;
    border-radius: 2px 0 0 2px;
    font-family: "DejaVu Sans", sans-serif;
}
.drop-line::after {
    right: 2px;
}
.line-width {
    width: 24px;
    height: 15px;
    padding: 0 0 0 4px;
    border: 1px solid #c3c6c8;
    border-width: 1px 0;
    background: #fff;
    font-size: 9px;
}
.stepper {
    height: 15px;
    padding: 0 4px 0 2px;
    border: 1px solid #c3c6c8;
    border-left: 0;
    border-radius: 0 2px 2px 0;
    background: #fff;
    margin-right: 4px;
}
.drop-start {
    width: 41px;
    margin-left: 3px;
}
.drop-end {
    width: 42px;
    margin-left: -1px;
    margin-right: 4px;
}
.drop-end select {
    padding-left: 4px;
    font-family: "DejaVu Sans", sans-serif;
}
.last-group {
    flex: 1;
    border-right: 0;
    padding-right: 9px;
}
.expand {
    margin-left: auto;
}

/* workspace */
.workspace {
    display: flex;
    flex: 1;
    min-height: 0;
}
.shapes-panel {
    display: flex;
    flex-direction: column;
    flex: none;
    width: 188px;
    background: #e7e9e8;
    border-right: 1px solid #a9adb0;
}
.shape-set {
    padding-bottom: 9px;
    border-bottom: 1px solid #d3d6d7;
}
.shape-set header {
    display: flex;
    align-items: center;
    justify-content: space-between;
    height: 32px;
    padding: 0 13px 0 11px;
}
.toggle {
    display: flex;
    align-items: center;
    gap: 2px;
    color: #5a5f63;
}
.toggle::before {
    content: "";
    border: 3px solid transparent;
    border-top: 4px solid #7a858e;
    border-bottom: 0;
}
.close path {
    stroke: #4a4f53;
    stroke-width: 1.3;
}
.shape-grid {
    display: grid;
    grid-template-columns: repeat(7, 1fr);
    grid-auto-rows: 26px;
    place-items: center;
    padding: 0 9px;
}
.shape-grid svg {
    width: 18px;
    height: 18px;
    fill: #fff;
    stroke: #1b1b1b;
    stroke-width: 1.3;
}
.shape-grid .plain {
    fill: none;
    stroke: none;
}
.shape-grid .note {
    fill: none;
    stroke-width: 1.7;
}
.dots circle {
    stroke: #999;
    stroke-width: 1;
}
.grabbed {
    position: relative;
}
.shape-grid .hand {
    position: absolute;
    left: 8px;
    top: 8px;
    width: 12px;
    height: 13px;
}
.add-shapes {
    display: flex;
    align-items: center;
    justify-content: center;
    gap: 6px;
    align-self: center;
    width: 69px;
    height: 21px;
    margin-top: 9px;
    border-radius: 2px;
    background: #5c92cf;
    color: #fff;
    font-weight: bold;
}
.import-data {
    display: flex;
    align-items: center;
    justify-content: center;
    gap: 6px;
    height: 30px;
    margin-top: auto;
    border-top: 1px solid #d3d6d7;
    background: #f2f2f2;
    color: #55595c;
    font-size: 9px;
}

/* stage: rulers and canvas */
.stage {
    display: grid;
    grid-template: 10px minmax(0, 1fr) / 10px minmax(0, 1fr);
    flex: 1;
    min-width: 0;
    overflow: hidden;
    background: #a9aeb2;
}
.ruler-h {
    grid-column: 1 / 3;
    width: 100%;
    height: 10px;
}
.ruler-v {
    width: 10px;
    height: 100%;
}
.ruler-h path, .ruler-v path {
    stroke: #cfd2d4;
    fill: none;
}
.ruler-h text, .ruler-v text {
    fill: #fff;
    font-size: 6px;
}
.canvas {
    position: relative;
    background: #fff;
}
.diagram {
    width: 712px;
    height: 468px;
}
.edges path {
    fill: none;
    stroke: #999;
    stroke-width: 2;
    marker-end: url(#arrow);
}
.nodes circle {
    fill: #d2d3d5;
}
.critical circle {
    stroke: #cc3f3f;
    stroke-width: 4;
}
.labels {
    font-family: "Liberation Sans", Arial, sans-serif;
    font-size: 13px;
    fill: #666;
    text-anchor: middle;
}
.selection .soft {
    fill: none;
    stroke: #8fd0f0;
    stroke-width: 2;
}
.selection .line {
    stroke: #5fa9cf;
    stroke-width: 5;
}
.selection .mark {
    fill: none;
    stroke: #2aa3e2;
    stroke-width: 2;
}
.selection .handle {
    fill: #fff;
    stroke: #4bb3e8;
    stroke-width: 2;
}
.preview {
    position: absolute;
    left: 2px;
    top: 185px;
    display: flex;
    flex-direction: column;
    align-items: center;
    width: 144px;
    height: 183px;
    padding-top: 56px;
    border: 1px solid #ccc;
    border-radius: 3px;
    background: #f2f2f2;
    box-shadow: 0 0 2px rgba(0, 0, 0, 0.2);
}
.preview::before {
    content: "";
    position: absolute;
    left: -6px;
    top: 86px;
    border: 5px solid transparent;
    border-right: 6px solid #f2f2f2;
    border-left: 0;
}
.preview text {
    font-family: "Liberation Sans", Arial, sans-serif;
    font-size: 11px;
    fill: #5c5c5c;
    text-anchor: middle;
}
.preview p {
    margin: auto 0 3px;
    font-weight: 500;
    color: #222;
}
.canvas-thumb-v, .canvas-thumb-h {
    position: absolute;
    border-radius: 3px;
    background: #d3d5d7;
}
.canvas-thumb-v {
    right: 1px;
    top: 136px;
    width: 5px;
    height: 176px;
}
.canvas-thumb-h {
    left: 195px;
    bottom: 1px;
    width: 245px;
    height: 5px;
}

/* data linking window */
.linking {
    position: absolute;
    left: 357px;
    top: 245px;
    width: 325px;
    border-radius: 3px;
    background: #f2f2f2;
    box-shadow: 0 2px 7px rgba(0, 0, 0, 0.45);
    overflow: hidden;
}
.linking header {
    display: flex;
    align-items: center;
    justify-content: space-between;
    height: 21px;
    padding: 0 7px 0 5px;
    background: #79848d;
    color: #fff;
    font-weight: 500;
}
.linking-bar {
    display: flex;
    align-items: center;
    gap: 7px;
    height: 27px;
    padding: 0 5px;
    border-bottom: 1px solid #8d9296;
    background: #d5d6d7;
}
.drop-source {
    width: 231px;
    margin-right: auto;
}
.drop-source select {
    height: 18px;
    padding-left: 7px;
    font-size: 8px;
    font-weight: 500;
}
.drop-source::after {
    top: 7px;
}
.table-wrap {
    position: relative;
}
table {
    width: 100%;
    table-layout: fixed;
    border-collapse: separate;
    border-spacing: 0;
    font-size: 7px;
    line-height: 10px;
    background: #fff;
}
.col-index {
    width: 24px;
}
.col-slack {
    width: 26px;
}
th, td {
    height: 14px;
    padding: 0 0 0 3px;
    overflow: hidden;
    white-space: nowrap;
    text-align: left;
    font-weight: normal;
    color: #55595c;
    border-right: 1px solid #e3e4e5;
    border-bottom: 1px solid #e3e4e5;
}
thead th {
    background: #f2f2f2;
    border-bottom-color: #b5b8ba;
    font-size: 6px;
}
tbody th {
    background: #f2f2f2;
    border-right: 1px solid #a9adb0;
}
.cell {
    display: flex;
    align-items: center;
}
.cell span {
    flex: 1;
    overflow: hidden;
}
.cell svg {
    flex: none;
    width: 7px;
    height: 12px;
    fill: none;
    stroke: #66717a;
    stroke-width: 1.2;
}
.selected svg {
    background: #d3e5f8;
    stroke: #3f86d2;
}
.thumb-v {
    position: absolute;
    right: 1px;
    top: 15px;
    width: 4px;
    height: 45px;
    border-radius: 2px;
    background: #cfd0d1;
}
.scroll-h {
    height: 6px;
    padding: 1px 0 0 24px;
}
.scroll-h span {
    display: block;
    width: 48%;
    height: 4px;
    border-radius: 2px;
    background: #ccc;
}

/* right side */
.rail {
    flex: none;
    width: 27px;
    background: #e7e9e8;
    border-left: 1px solid #c3c6c8;
}
.rail button {
    display: flex;
    align-items: center;
    justify-content: center;
    width: 100%;
    height: 33px;
}
.rail .collapse {
    height: 18px;
}
.rail .active {
    background: #f2f2f2;
    box-shadow: 0 0 2px rgba(0, 0, 0, 0.2);
}
.data-panel {
    display: flex;
    flex-direction: column;
    flex: none;
    width: 163px;
    background: #f2f2f2;
}
.data-panel header {
    display: flex;
    align-items: center;
    justify-content: space-between;
    flex: none;
    height: 20px;
    padding: 0 11px 0 9px;
    background: #79848d;
    color: #fff;
    font-weight: 500;
}
.data-body {
    position: relative;
    display: flex;
    flex-direction: column;
    flex: 1;
    min-height: 0;
    padding: 7px 7px 0 6px;
}
.data-source {
    display: flex;
    align-items: center;
    flex: none;
    height: 21px;
    padding: 0 7px 0 12px;
    border-radius: 2px;
    background: #d4d6d8;
}
.data-source svg {
    margin-left: 6px;
}
.data-source span {
    flex: 1;
    margin-left: 8px;
}
.fields {
    flex: 1;
    min-height: 0;
    margin: 7px 0 0;
    padding: 2px 3px 0;
    overflow: hidden;
    border: 1px solid #e3e4e5;
    border-bottom: 0;
    background: #fff;
}
.fields dt {
    line-height: 15px;
    font-weight: bold;
    color: #4a5258;
}
.fields dd {
    margin: 0 0 0 2px;
    line-height: 15px;
    font-weight: 500;
    color: #333;
}
.fields .name {
    padding-bottom: 10px;
    font-weight: normal;
    color: #555;
}
.panel-thumb {
    position: absolute;
    right: 0;
    top: 2px;
    width: 5px;
    height: 386px;
    border-radius: 2px;
    background: #cbcdce;
}

/* bottom bar */
.bottombar {
    display: flex;
    align-items: center;
    flex: none;
    gap: 11px;
    height: 21px;
    padding: 0 8px 0 67px;
    background: #79848d;
    color: #fff;
}
.page-tab, .zoom-value {
    display: flex;
    align-items: center;
    justify-content: center;
    gap: 4px;
    font-weight: 500;
}
.page-tab {
    align-self: flex-start;
    width: 84px;
    height: 18px;
    margin: 0 -2px;
    border-radius: 0 0 3px 3px;
    background: #3d4750;
}
.page-tab::after, .zoom-value::after {
    content: "";
    border: 3px solid transparent;
    border-top: 5px solid #fff;
    border-bottom: 0;
}
.zoom {
    display: flex;
    align-items: center;
    gap: 9px;
    height: 16px;
    margin-left: auto;
    padding-left: 8px;
    border-left: 1px solid #5f6971;
}
.zoom input {
    width: 91px;
    height: 8px;
    margin: 0 -1px;
    appearance: none;
    background: linear-gradient(#b9bdc0, #b9bdc0) center / 100% 2px no-repeat;
}
.zoom input::-webkit-slider-thumb {
    appearance: none;
    width: 8px;
    height: 8px;
    border-radius: 50%;
    background: #5c92cf;
}
.zoom-value {
    margin-left: -5px;
}
```
FILE: script.js
```js
const SVG_NS = 'http://www.w3.org/2000/svg';
const INCH = 87.6;

// first = distance of the first numbered mark from the ruler's start
function drawRuler(svg, vertical, first, firstNumber) {
    const length = vertical ? svg.clientHeight : svg.clientWidth;
    let d = '';
    for (let i = -8; ; i++) {
        const pos = Math.round(first + i * INCH / 8) + 0.5;
        if (pos > length) break;
        if (pos < (vertical ? 0 : 10)) continue;
        const major = i % 8 === 0;
        const start = major ? 0 : (i % 4 === 0 ? 5 : 7);
        d += vertical ? `M${start} ${pos}H10` : `M${pos} ${start}V10`;
        if (major) {
            const text = document.createElementNS(SVG_NS, 'text');
            text.setAttribute('x', vertical ? 0 : pos + 1);
            text.setAttribute('y', vertical ? pos + 7 : 6);
            text.textContent = firstNumber + i / 8;
            svg.appendChild(text);
        }
    }
    const path = document.createElementNS(SVG_NS, 'path');
    path.setAttribute('d', d);
    svg.appendChild(path);
}

drawRuler(document.getElementById('rulerH'), false, 59, 1);
drawRuler(document.getElementById('rulerV'), true, 38, 2);

const rows = [
    [2, 'Dig groun', '-', 3, 6, 7, '5.67', '0.44', 0],
    [3, 'Lay found', 2, 6, 11, 13, '10.50', '1.36', 0],
    [4, 'Frame ho', 3, 18, 21, 22, '20.67', '0.44', 0],
    [5, 'Install wi', 4, 1, 4, 5, '3.67', '0.44', 2],
    [6, 'Install roo', 5, 2, 3, 4, '3.00', '0.11', 2],
    [7, 'Put in rou', 4, 6, 9, 11, '8.83', '0.69', 0],
    [8, 'Install sh', 7, 2, 4, 5, '3.83', '0.25', 0],
    [9, 'Paint wal', 8, 1, 3, 4, '2.83', '0.25', 0],
    [10, 'Install floori', 9, 1, 2, 4, '2.17', '0.25', 0]
];
const link = '<svg viewBox="0 0 7 12"><path d="M1.800 5.300V3q0-1.700 1.700-1.700T5.200 3v2q0 1.200-1.700 1.200M5.200 6.700V9q0 1.700-1.700 1.700T1.800 9V7q0-1.200 1.700-1.200M3.500 3.500v5"/></svg>';

document.getElementById('rows').innerHTML = rows.map(([index, ...cells]) => `
    <tr class="${index === 9 ? 'selected' : ''}">
        <th>${index}</th>
        ${cells.map((value, i) => `<td><div class="cell"><span>${value}</span>${index < 10 && i < 7 ? link : ''}</div></td>`).join('')}
    </tr>
`).join('');
```
